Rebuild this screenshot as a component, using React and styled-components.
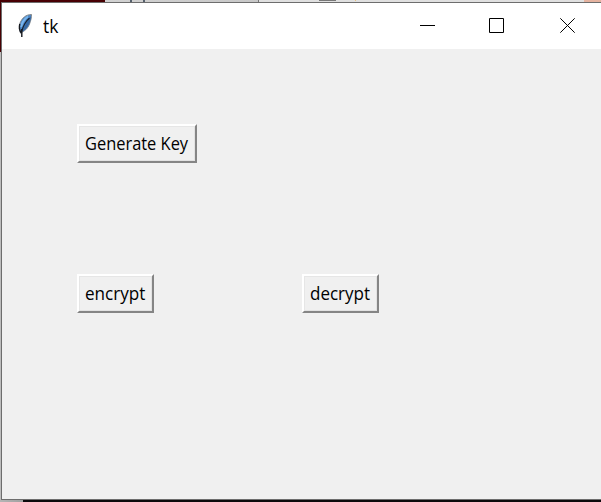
import React from "react";
import styled, { createGlobalStyle } from "styled-components";

const GlobalStyle = createGlobalStyle`
  html, body { margin: 0; overflow: hidden; }
  * { box-sizing: border-box; }
`;

const Desktop = styled.div`
  width: 601px;
  height: 502px;
  padding: 2px 0 2px 1px;
  overflow: hidden;
  font-family: "Open Sans", "Noto Sans", sans-serif;
  color: #000;
  background:
    linear-gradient(#777, #777) 319px 0 / 17px 1px no-repeat,
    linear-gradient(#e8c27c, #e8c27c) 355px 0 / 1px 1px no-repeat,
    linear-gradient(#55606c, #55606c) 130px 0 / 2px 2px no-repeat,
    linear-gradient(#55606c, #55606c) 143px 0 / 2px 2px no-repeat,
    linear-gradient(#777, #777) 258px 0 / 1px 2px no-repeat,
    linear-gradient(90deg, #480003 105px, #d2d2d2 105px, #c8c8c8 258px, #e0e0e0 259px, #e0e0e0 584px, #e5b3a0 584px) 0 0 / 100% 2px no-repeat,
    linear-gradient(90deg, #b5b5b5, #a0a0a0 23px, #0c0a0c 23px) 0 100% / 100% 2px no-repeat,
    linear-gradient(#480003 52px, #bdbdbd 52px);
`;

const Window = styled.section`
  height: 498px;
  display: flex;
  flex-direction: column;
  border: solid #6d6d6d;
  border-width: 1px 0 1px 1px;
  background: #f0f0f0;
`;

const TitleBar = styled.header`
  height: 46px;
  flex: none;
  display: flex;
  align-items: center;
  padding-left: 15px;
  background: #fff;
`;

const Title = styled.span`
  margin: 0 auto 0 9px;
  font-size: 18px;
  line-height: 24px;
  transform: scaleX(0.97);
  transform-origin: left;
`;

const Controls = styled.div`
  display: flex;
  gap: 54px;
  padding: 0 26px 1px 0;
`;

const Control = styled.svg`
  display: block;
  width: 15px;
  height: 15px;
  fill: none;
  stroke: #000;
  stroke-width: 1;

  &:last-child { margin-left: 2px; }
`;

const Content = styled.main`
  flex: 1;
  display: grid;
  grid-template: 39px 39px / 225px 225px;
  row-gap: 111px;
  padding: 75px 0 0 75px;
  align-content: start;
`;

const TkButton = styled.button`
  width: ${(p) => p.$width}px;
  height: 39px;
  padding: 0 0 2px 6px;
  display: flex;
  align-items: center;
  grid-column: ${(p) => p.$column};
  font: inherit;
  color: #000;
  background: #f0f0f0;
  border: solid;
  border-width: 2px;
  border-color: #fff #858585 #858585 #fff;
  box-shadow: inset 1px 1px #e6e6e6, inset -1px -1px #e2e2e2;
`;

const Label = styled.span`
  font-size: 18px;
  line-height: 24px;
  white-space: nowrap;
  transform: scaleX(${(p) => p.$stretch});
  transform-origin: left;
`;

function Feather() {
  return (
    <svg width="17" height="26" viewBox="0 0 17 26">
      <path d="M14.5 1.5C9 1.5 5 5 3 10c-1 4-1 7 .5 10 4-2 7-4 9-9 1.500-4 2-6.500 2-9.500Z" fill="#4c87c8" stroke="#85888b" />
      <path d="M14 3c0 5-2 9-5 13l-4 3c2-6 5-11 9-16Z" fill="#3568a3" />
      <path d="M11 3.500C8 5.500 5 9 4 14" fill="none" stroke="#78b6ef" strokeWidth="2" />
      <path d="M12.500 5C9 8 6.500 12 4.800 18" fill="none" stroke="#18222f" strokeWidth="1.2" />
      <path d="M2.8 11c-1 4 0 7 1.5 9M4.8 16v8" fill="none" stroke="#16191e" strokeWidth="1.4" />
    </svg>
  );
}

export default function App() {
  return (
    <>
      <GlobalStyle />
      <Desktop>
        <Window>
          <TitleBar>
            <Feather />
            <Title>tk</Title>
            <Controls>
              <Control viewBox="0 0 15 15"><path d="M0 7.5h15" /></Control>
              <Control viewBox="0 0 15 15"><path d="M.5 .5h14v14H.5Z" /></Control>
              <Control viewBox="0 0 15 15"><path d="m.3.3 14.4 14.4m0-14.4L.3 14.7" /></Control>
            </Controls>
          </TitleBar>
          <Content>
            <TkButton $width={120} $column="1"><Label $stretch={0.912}>Generate Key</Label></TkButton>
            <TkButton $width={77} $column="1"><Label $stretch={0.95}>encrypt</Label></TkButton>
            <TkButton $width={77} $column="2"><Label $stretch={0.945}>decrypt</Label></TkButton>
          </Content>
        </Window>
      </Desktop>
    </>
  );
}
